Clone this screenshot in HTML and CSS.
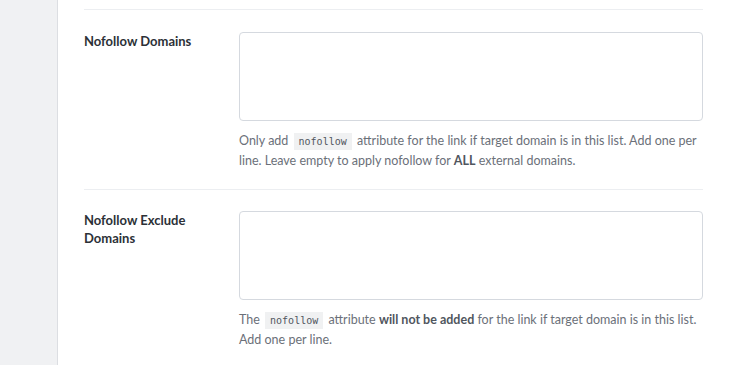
FILE: index.html
```html
<!DOCTYPE html>
<html lang="en">
<head>
    <meta charset="UTF-8">
    <title>Link Settings</title>
    <link rel="stylesheet" href="styles.css">
</head>
<body>
    <div class="sidebar"></div>
    <div class="main">
        <div class="setting-row">
            <label class="setting-label" for="nofollow-domains">Nofollow Domains</label>
            <div class="setting-field">
                <textarea id="nofollow-domains" class="setting-input"></textarea>
                <p class="setting-help">Only add <code>nofollow</code> attribute for the link if target domain is in this list. Add one per line. Leave empty to apply nofollow for <strong>ALL</strong> external domains.</p>
            </div>
        </div>
        <div class="setting-row">
            <label class="setting-label" for="nofollow-exclude">Nofollow Exclude Domains</label>
            <div class="setting-field">
                <textarea id="nofollow-exclude" class="setting-input"></textarea>
                <p class="setting-help">The <code>nofollow</code> attribute <strong>will not be added</strong> for the link if target domain is in this list. Add one per line.</p>
            </div>
        </div>
    </div>
</body>
</html>
```

FILE: styles.css
```css
body {
    margin: 0;
    padding: 0;
    display: flex;
    min-height: 100vh;
    background: #fff;
    font-family: Lato, "Open Sans", sans-serif;
    font-size: 13px;
    color: #1d2327;
    overflow: hidden;
}

.sidebar {
    width: 57px;
    flex-shrink: 0;
    background: #f0f1f3;
    border-right: 1px solid #dcdee2;
}

.main {
    flex: 1;
    padding: 0 27px 0 26px;
    margin-top: 9px;
}

.setting-row {
    display: flex;
    border-top: 1px solid #eceef1;
    padding: 22px 0 19px;
}

.setting-row + .setting-row {
    padding-top: 21px;
}

.setting-label {
    width: 155px;
    flex-shrink: 0;
    padding-right: 20px;
    box-sizing: border-box;
    font-weight: 700;
    line-height: 18px;
    color: #2c3137;
}

.setting-field {
    flex: 1;
}

.setting-input {
    display: block;
    width: 100%;
    height: 89px;
    box-sizing: border-box;
    margin: 0;
    border: 1px solid #d5d9df;
    border-radius: 4px;
    resize: none;
    background: #fff;
}

.setting-help {
    margin: 10px 0 0;
    font-size: 12.5px;
    line-height: 19px;
    color: #6b7079;
}

.setting-help strong {
    font-weight: 700;
    color: #50565e;
}

code {
    font-family: "DejaVu Sans Mono", "Liberation Mono", monospace;
    font-size: 10px;
    color: #50565e;
    background: #f0f1f2;
    padding: 3px 5px;
    margin: 0 2px;
}
```
